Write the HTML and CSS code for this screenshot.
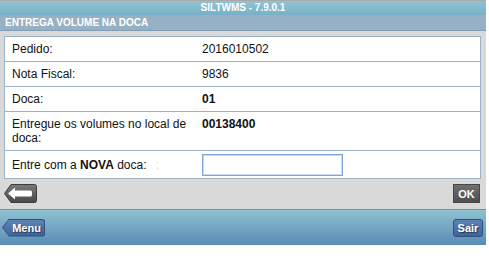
FILE: index.html
```html
<!DOCTYPE html>
<html lang="pt">
<head>
  <meta charset="UTF-8" />
  <title>SILTWMS</title>
  <link rel="stylesheet" href="styles.css">
</head>
<body>

  <div class="page">
    <div class="titlebar">SILTWMS - 7.9.0.1</div>
    <div class="subtitle">ENTREGA VOLUME NA DOCA</div>

    <div class="content">
      <table class="info">
        <tr>
          <td class="label">Pedido:</td>
          <td>2016010502</td>
        </tr>
        <tr>
          <td class="label">Nota Fiscal:</td>
          <td>9836</td>
        </tr>
        <tr>
          <td class="label">Doca:</td>
          <td class="strong">01</td>
        </tr>
        <tr>
          <td class="label">Entregue os volumes no local de doca:</td>
          <td class="strong">00138400</td>
        </tr>
        <tr class="input-row">
          <td class="label">Entre com a <b>NOVA</b> doca: <span class="faint">:</span></td>
          <td><input type="text" id="novaDoca" /></td>
        </tr>
      </table>

      <div class="actions">
        <button class="btn-back" title="Voltar">
          <svg width="33" height="19" viewBox="0 0 33 19">
            <defs>
              <linearGradient id="backGrad" x1="0" y1="0" x2="0" y2="1">
                <stop offset="0" stop-color="#7a7a7a" />
                <stop offset="1" stop-color="#484848" />
              </linearGradient>
            </defs>
            <path d="M7 0.5 H30.5 a2 2 0 0 1 2 2 V16.5 a2 2 0 0 1 -2 2 H7 L0.5 9.5 Z" fill="url(#backGrad)" stroke="#3c3c3c" />
            <path d="M4 9.5 L11 3.5 V6.5 H26.5 a1.5 1.5 0 0 1 1.5 1.5 V11 a1.5 1.5 0 0 1 -1.5 1.5 H11 V15.5 Z" fill="#fff" />
          </svg>
        </button>
        <button class="btn-ok">OK</button>
      </div>
    </div>

    <div class="footer">
      <button class="btn-menu"><span>Menu</span></button>
      <button class="btn-sair">Sair</button>
    </div>
  </div>

</body>
</html>
```

FILE: styles.css
```css
body {
  margin: 0;
  background-color: #fff;
  font-family: "Liberation Sans", Arial, sans-serif;
  color: #111;
}

.page {
  width: 486px;
}

.titlebar {
  border-top: 1px solid #a8a8a8;
  height: 14px;
  line-height: 14px;
  background: linear-gradient(#90c4d4, #78b0c6);
  color: #fff;
  font-weight: bold;
  font-size: 10px;
  text-align: center;
}

.subtitle {
  height: 15px;
  line-height: 16px;
  padding-left: 5px;
  background-color: #96b1c4;
  border-bottom: 1px solid #7f9db3;
  color: #fff;
  font-weight: bold;
  font-size: 10px;
}

.content {
  background-color: #d9d9d9;
  padding: 5px 5px 6px 4px;
  border-bottom: 1px solid #8a8a8a;
}

.info {
  width: 477px;
  border-collapse: collapse;
  background-color: #fff;
  border: 1px solid #9bb3c6;
  font-size: 12px;
  line-height: 14px;
}

.info td {
  padding: 5px 7px;
  border-top: 1px solid #9bb3c6;
  vertical-align: top;
}

.info td.label {
  width: 176px;
}

.info td.strong {
  font-weight: bold;
}

.input-row td {
  padding-top: 3px;
  padding-bottom: 2px;
  vertical-align: middle;
}

.faint {
  color: #d4dde8;
  padding-left: 6px;
}

.input-row input {
  display: block;
  box-sizing: border-box;
  width: 141px;
  height: 22px;
  margin: 0;
  border: 1px solid #7ea6d8;
  box-shadow: inset 0 0 0 1px #c9dbf0;
  outline: none;
  font-family: inherit;
  font-size: 12px;
}

.actions {
  display: flex;
  justify-content: space-between;
  align-items: center;
  margin-top: 5px;
  padding-right: 1px;
}

.actions button {
  font-family: inherit;
  cursor: pointer;
}

.btn-back {
  display: block;
  padding: 0;
  border: none;
  background: none;
  height: 19px;
}

.btn-back svg {
  display: block;
}

.btn-ok {
  height: 19px;
  width: 27px;
  padding: 0;
  border: 1px solid #474747;
  background: linear-gradient(#707070, #4e4e4e);
  color: #fff;
  font-weight: bold;
  font-size: 11px;
}

.footer {
  height: 35px;
  display: flex;
  justify-content: space-between;
  align-items: center;
  padding: 0 3px 0 2px;
  background: linear-gradient(#8fc1d1, #5a8bb7);
}

.footer button {
  height: 18px;
  font-family: inherit;
  font-weight: bold;
  font-size: 11px;
  color: #fff;
  text-shadow: 1px 1px 1px #1c3558;
  cursor: pointer;
}

.btn-menu {
  width: 43px;
  padding: 1px 1px 1px 1px;
  border: none;
  border-radius: 0 3px 3px 0;
  background: #2f4f7c;
  clip-path: polygon(7px 0, 100% 0, 100% 100%, 7px 100%, 0 50%);
}

.btn-menu span {
  display: flex;
  align-items: center;
  justify-content: center;
  height: 100%;
  padding-left: 6px;
  border-radius: 0 2px 2px 0;
  background: linear-gradient(#5c82b2, #3f6496);
  clip-path: polygon(6px 0, 100% 0, 100% 100%, 6px 100%, 0 50%);
}

.btn-sair {
  width: 30px;
  padding: 0;
  border: 1px solid #2f4f7c;
  border-radius: 3px;
  background: linear-gradient(#5c82b2, #3f6496);
}
```
